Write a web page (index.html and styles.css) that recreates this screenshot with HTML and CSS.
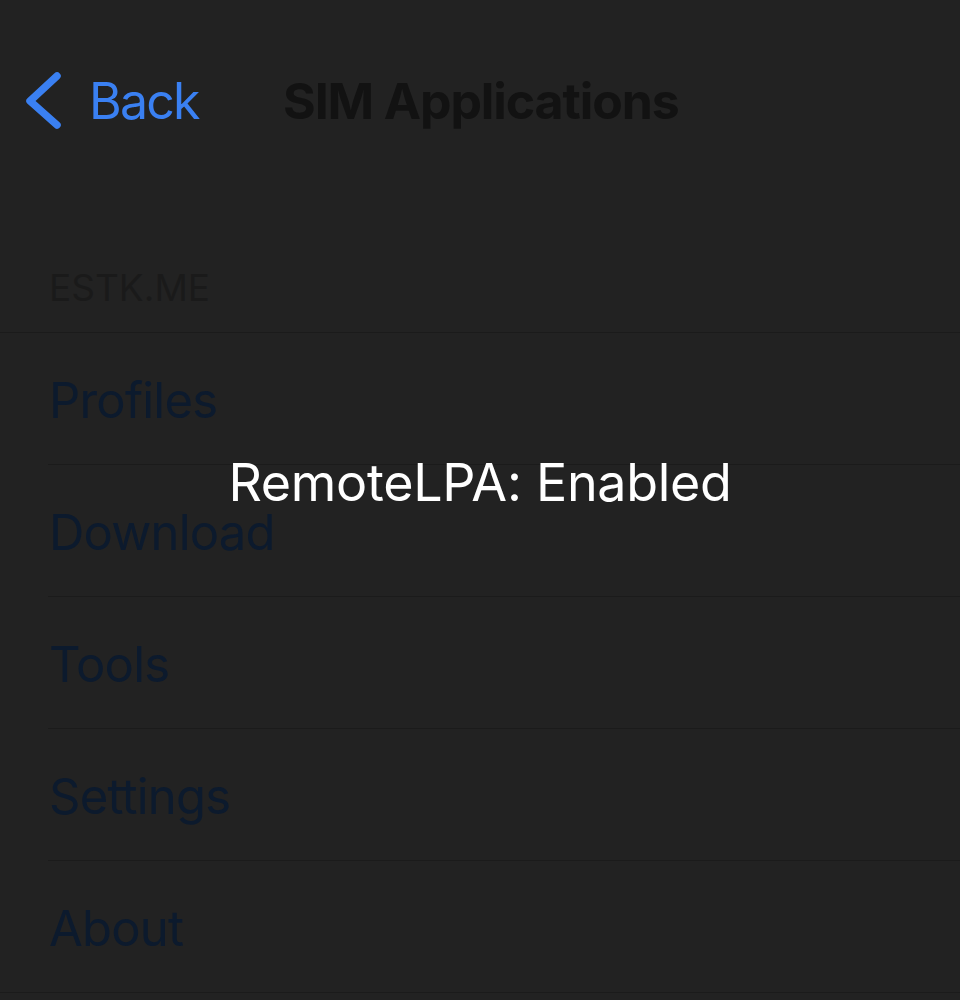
FILE: index.html
```html
<!DOCTYPE html>
<html>
<head>
<meta charset="utf-8">
<link rel="stylesheet" href="styles.css">
</head>
<body>
<div class="screen">
  <header class="nav">
    <div class="back">
      <svg class="chev" width="40" height="60" viewBox="0 0 40 60"><path d="M33 5 L6 30 L33 54" fill="none" stroke="#3a80f2" stroke-width="7.5" stroke-linecap="round" stroke-linejoin="round"/></svg>
      <span class="back-label">Back</span>
    </div>
    <h1 class="title">SIM Applications</h1>
  </header>
  <div class="section-head">ESTK.ME</div>
  <ul class="list">
    <li class="row"><span>Profiles</span></li>
    <li class="row"><span>Download</span></li>
    <li class="row"><span>Tools</span></li>
    <li class="row"><span>Settings</span></li>
    <li class="row"><span>About</span></li>
  </ul>
  <div class="toast">RemoteLPA: Enabled</div>
</div>
</body>
</html>
```
FILE: styles.css
```css
html, body {
  margin: 0;
  padding: 0;
  background: #222222;
}
body {
  font-family: Inter, "Noto Sans", sans-serif;
  height: 1000px;
  overflow: hidden;
}
.screen {
  position: relative;
  height: 1000px;
  background: #222222;
}
.nav {
  height: 202px;
  display: flex;
  align-items: center;
  padding-left: 24px;
  box-sizing: border-box;
}
.back {
  display: flex;
  align-items: center;
  width: 259px;
}
.chev {
  display: block;
  margin-right: 25px;
}
.back-label {
  color: #3a80f2;
  font-size: 50px;
  letter-spacing: -1.8px;
}
.title {
  margin: 0;
  font-size: 50px;
  font-weight: 700;
  color: #121212;
  letter-spacing: -1.1px;
}
.section-head {
  height: 131px;
  box-sizing: border-box;
  display: flex;
  align-items: flex-end;
  padding: 0 0 22px 49px;
  font-size: 37px;
  color: #1a1a1a;
  border-bottom: 1px solid #1b1b1b;
}
.list {
  list-style: none;
  margin: 0;
  padding: 0 0 0 48px;
}
.row {
  height: 132px;
  box-sizing: border-box;
  display: flex;
  align-items: center;
  border-bottom: 1px solid #1b1b1b;
  font-size: 49px;
  color: #0c1a2d;
  padding: 4px 0 0 1px;
  letter-spacing: -0.8px;
}
.row:last-child {
  margin-left: -48px;
  padding-left: 49px;
}
.toast {
  position: absolute;
  left: 0;
  right: 0;
  top: 451px;
  text-align: center;
  color: #ffffff;
  font-size: 52px;
  letter-spacing: -0.3px;
}
```
